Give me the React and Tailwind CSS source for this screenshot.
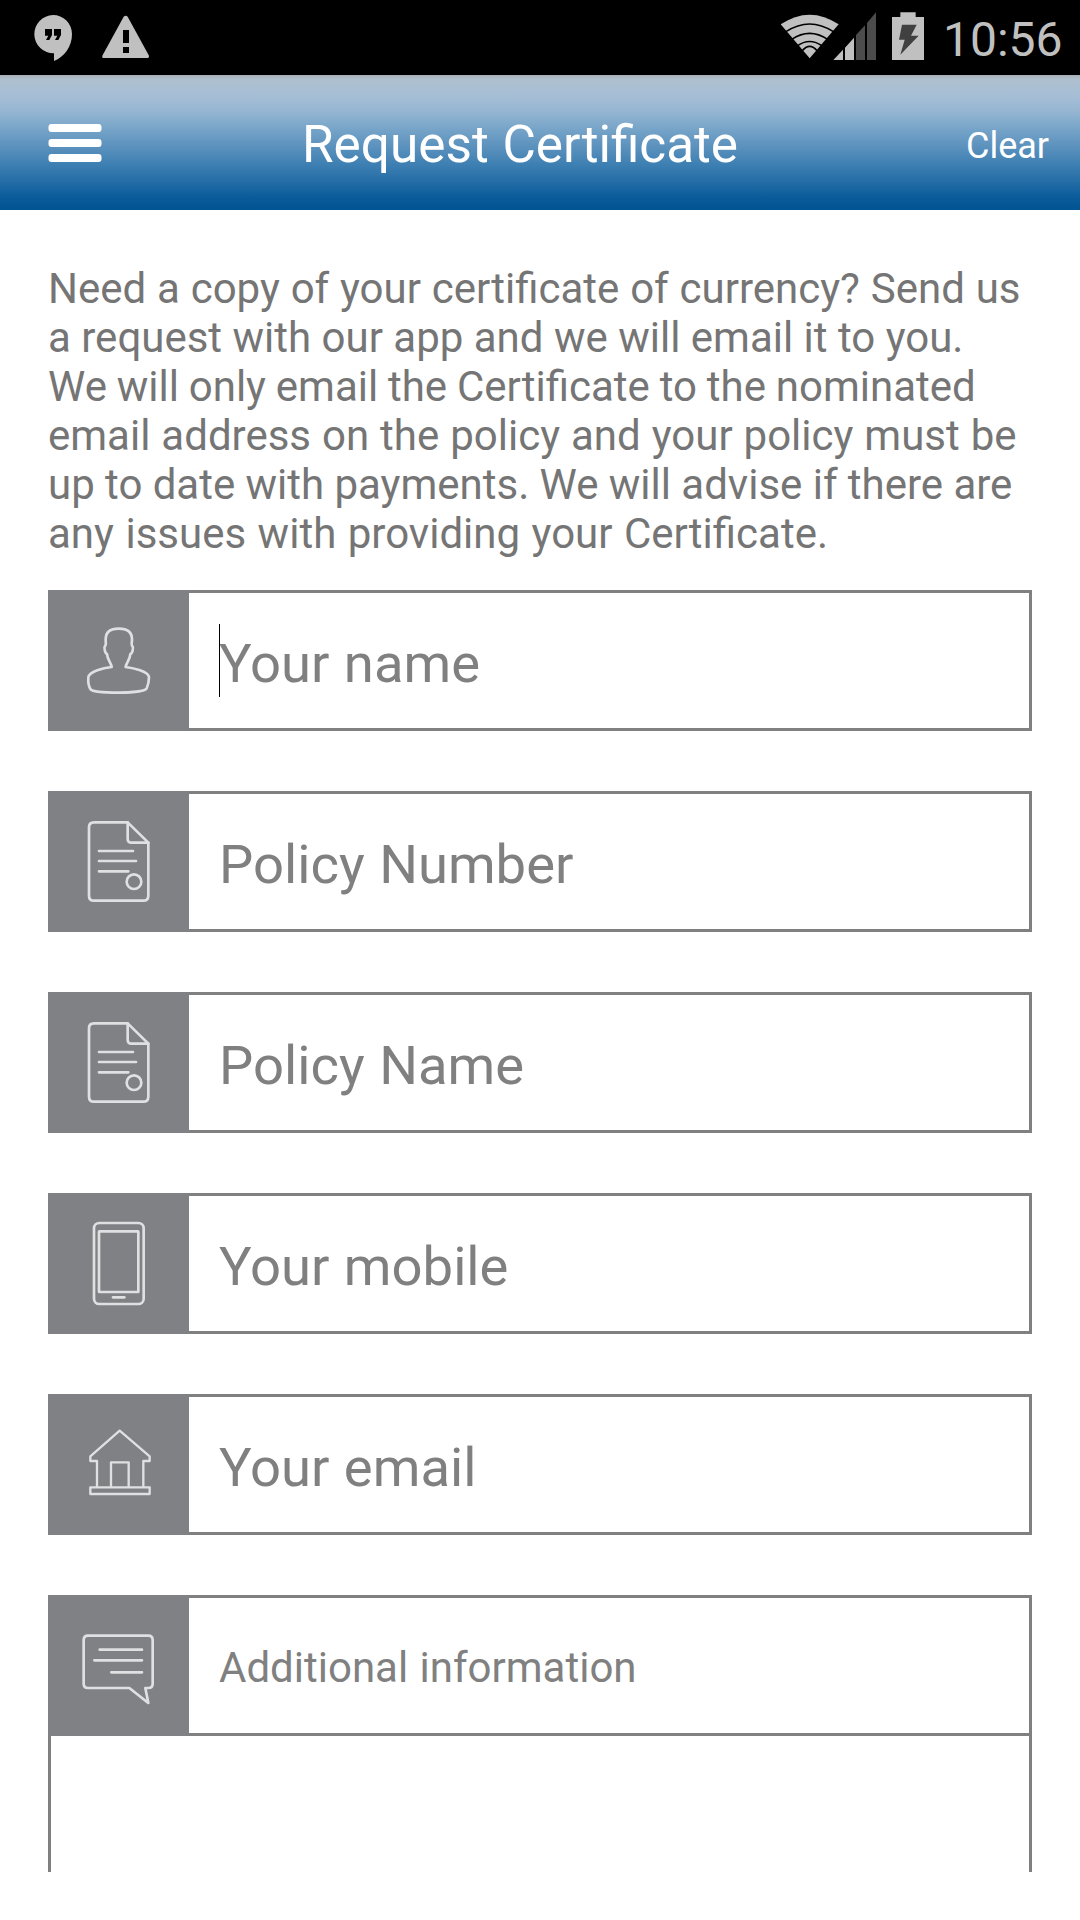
import clsx from 'clsx';

const introLines = [
  { text: 'Need a copy of your certificate of currency? Send us', spacing: '[word-spacing:0.4px]' },
  { text: 'a request with our app and we will email it to you.', spacing: '[word-spacing:0px]' },
  { text: 'We will only email the Certificate to the nominated', spacing: '[word-spacing:-0.6px]' },
  { text: 'email address on the policy and your policy must be', spacing: '[word-spacing:0.55px]' },
  { text: 'up to date with payments. We will advise if there are', spacing: '[word-spacing:-0.1px]' },
  { text: 'any issues with providing your Certificate.', spacing: '[word-spacing:1.1px]' },
];

// Field icons share a 423 unit grid, three units to a pixel
const FieldIcon = ({ viewBox, children }) => (
  <svg
    viewBox={viewBox}
    className="h-[141px] w-[141px] shrink-0 bg-[#808184]"
    fill="none"
    stroke="#dfe0e2"
    strokeWidth="8"
    strokeLinecap="round"
    strokeLinejoin="round"
  >
    {children}
  </svg>
);

const PersonIcon = () => (
  <FieldIcon viewBox="54 60 423 423">
    <path d="M245 291C244 280 232 270 231 252C225 250 221 232 225 228C229 226 227 218 227 208C227 186 242 176 266 176C290 176 306 186 306 208C306 218 303 226 307 228C311 232 308 250 301 252C300 270 288 280 287 291C310 294 356 304 357 322C357 335 354 346 350 355C345 364 300 368 266 368C232 368 186 366 181 357C177 350 174 335 175 322C177 304 222 294 245 291Z" />
  </FieldIcon>
);

const DocumentIcon = () => (
  <FieldIcon viewBox="54 33 423 423">
    <path d="M293 127H192Q177 127 177 142V347Q177 362 192 362H340Q355 362 355 347V188Z" />
    <path d="M293 127V176Q293 188 305 188H355M207 213H309M207 243H318M207 274H295" />
    <circle cx="312" cy="305" r="22" />
  </FieldIcon>
);

const PhoneIcon = () => (
  <FieldIcon viewBox="54 39 423 423">
    <rect x="192" y="129" width="149" height="243" rx="16" />
    <rect x="207" y="154" width="118" height="182" rx="1" />
    <path d="M249 352H283" />
  </FieldIcon>
);

const HouseIcon = () => (
  <FieldIcon viewBox="54 42 423 423">
    <g strokeWidth="7">
      <path d="M201 320V243H181V229L269 152L359 229V243H340V320" />
      <path d="M243 320V247H296V320M181 322H359V342H181Z" />
    </g>
  </FieldIcon>
);

const CommentIcon = () => (
  <FieldIcon viewBox="54 45 423 423">
    <path d="M298 324H174Q161 324 161 311V180Q161 167 174 167H355Q368 167 368 180V311Q368 324 355 324H346L355 369Z" />
    <path d="M209 209H336M193 241H336M244 277H336" />
  </FieldIcon>
);

const fields = [
  { label: 'Your name', icon: PersonIcon, focused: true },
  { label: 'Policy Number', icon: DocumentIcon },
  { label: 'Policy Name', icon: DocumentIcon },
  { label: 'Your mobile', icon: PhoneIcon },
  { label: 'Your email', icon: HouseIcon },
];

const Field = ({ label, icon: Icon, focused, small }) => (
  <div className="flex h-[141px]">
    <Icon />
    <div className="relative flex flex-1 items-center border-y-[3px] border-r-[3px] border-[#808080] pl-[30px] text-[#808080]">
      {focused && <div className="absolute left-[30px] top-[31px] h-[73px] w-px bg-black" />}
      <span
        className={clsx(
          'whitespace-nowrap',
          small ? 'pt-[4px] text-[42px] [word-spacing:1px]' : 'pt-[6px] text-[54.4px] [word-spacing:1px]'
        )}
      >
        {label}
      </span>
    </div>
  </div>
);

const StatusBar = () => (
  <div className="flex h-[75px] items-center justify-between bg-black">
    <svg viewBox="0 0 480 225" className="h-[75px] w-[160px]" fill="#c0c0c0">
      <path d="M159 45A57 57 0 0 1 216 102C216 140 193 171 162 183V160A57.5 57.5 0 0 1 159 45Z" />
      <path d="M135 87H156V105L148 120H138L145 107H135ZM162 87H183V105L175 120H165L172 107H162Z" fill="#000" />
      <path d="M371 50Q377 45 383 50L447 167Q448 174 443 174H310Q305 174 307 167Z" />
      <path d="M369 90H387V129H369ZM369 141H387V159H369Z" fill="#000" />
    </svg>
    <div className="flex h-[75px] items-center">
      <svg viewBox="150 0 480 225" className="h-[75px] w-[160px]" fill="#c0c0c0">
        <path d="M182 73Q269 15 356 73L269 175Z" />
        <path
          d="M198 95Q269 49 340 95M215 118Q269 82 323 118M231 138Q269 111 307 138M246 153Q269 125 292 153"
          fill="none"
          stroke="#000"
          strokeWidth="5"
        />
        <path d="M340 180L369 149V180ZM375 143L402 113V180H375Z" />
        <path d="M408 105L435 76V180H408ZM441 69L468 37V180H441Z" fill="#4c4c4c" />
        <path d="M541 37H587V51H612V180H516V51H541Z" />
        <path d="M546 74H590L573 107H596L541 164L554 119H537Z" fill="#404040" />
      </svg>
      <span className="w-[150px] pl-[13px] pt-[4px] text-[48px] leading-none text-[#c0c0c0]">10:56</span>
    </div>
  </div>
);

const Header = () => (
  <header className="flex h-[135px] items-center bg-[linear-gradient(to_bottom,#a9b0b6_0px,#afc0cf_4px,#a5bed6_22px,#94b5d1_37px,#75a3c8_55px,#5b91bd_72px,#4081b3_88px,#276fa8_105px,#0b5c9b_122px,#005392_135px)] text-white">
    <svg viewBox="0 0 54 40" className="ml-[48px] h-[40px] w-[54px]" fill="#fff">
      <rect x="0.5" y="1" width="53" height="8" rx="3" />
      <rect x="0.5" y="16" width="53" height="8" rx="3" />
      <rect x="0.5" y="31" width="53" height="8" rx="3" />
    </svg>
    <h1 className="ml-[200px] w-[664px] whitespace-nowrap pt-[6px] text-[51.3px] [word-spacing:1px]">
      Request Certificate
    </h1>
    <span className="whitespace-nowrap pt-[6px] text-[36px]">Clear</span>
  </header>
);

export default function App() {
  return (
    <div className="h-[1920px] w-[1080px] overflow-hidden bg-white font-['Roboto',sans-serif]">
      <StatusBar />
      <Header />
      <main className="px-[48px] pt-[54px]">
        <p className="text-[42px] leading-[49px] text-[#757575]">
          {introLines.map((line) => (
            <span key={line.text} className={clsx('block whitespace-nowrap', line.spacing)}>
              {line.text}
            </span>
          ))}
        </p>
        <div className="mt-[32px] flex flex-col gap-[60px]">
          {fields.map((field) => (
            <Field key={field.label} {...field} />
          ))}
          <div>
            <Field label="Additional information" icon={CommentIcon} small />
            <div className="h-[136px] border-x-[3px] border-[#808080]" />
          </div>
        </div>
      </main>
    </div>
  );
}
